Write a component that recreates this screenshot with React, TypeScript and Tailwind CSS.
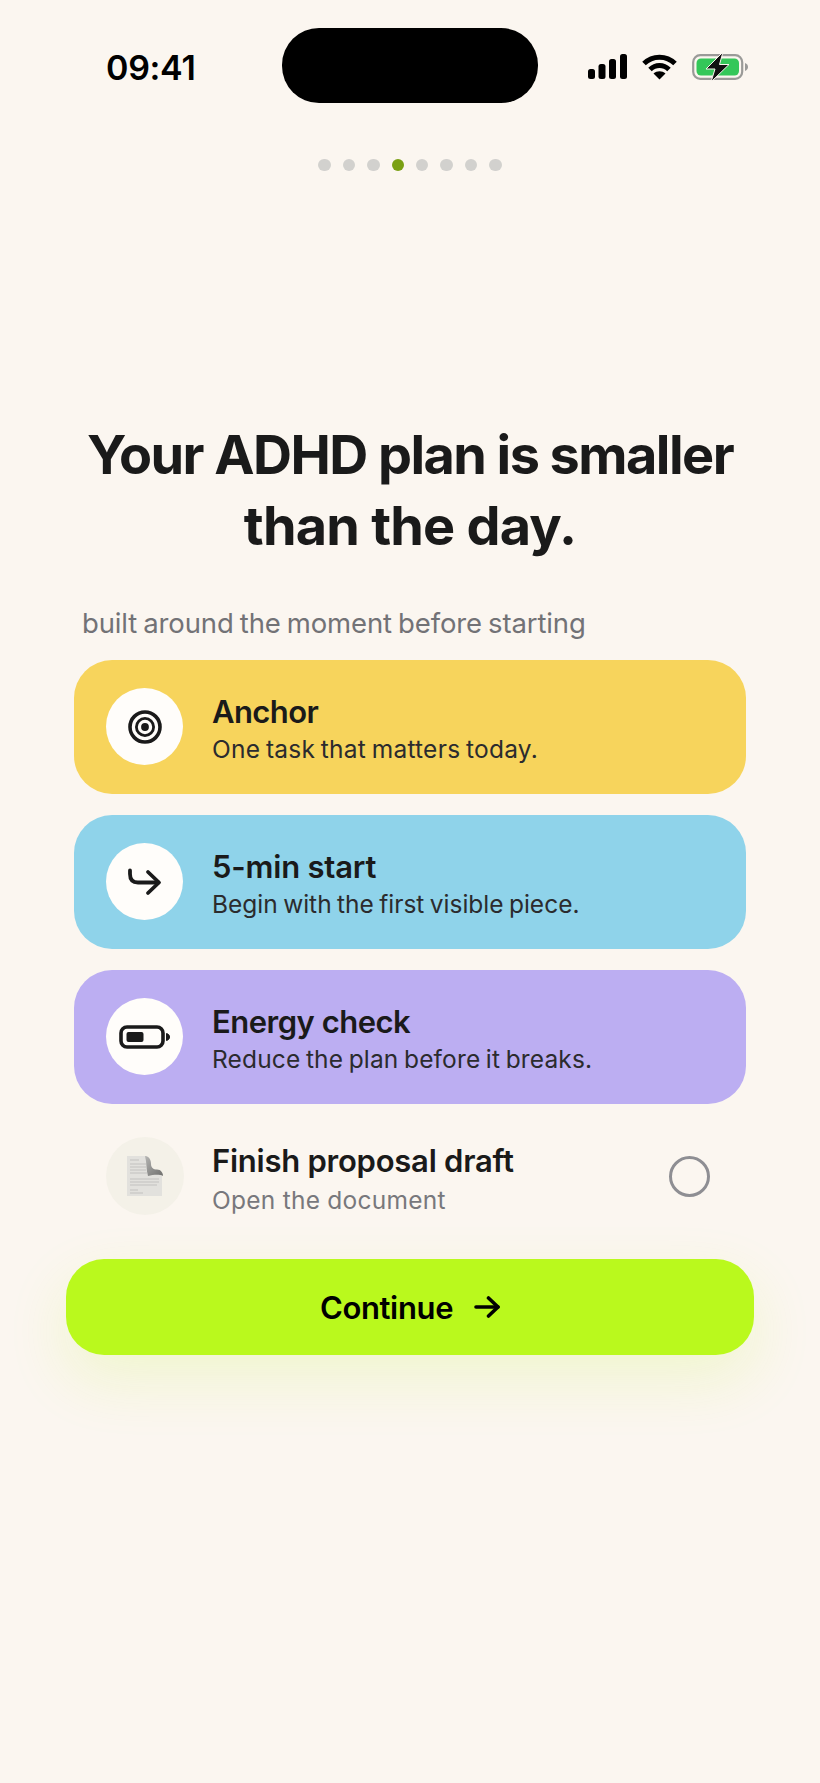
import React from "react";

const font = { fontFamily: "Inter, 'Noto Sans', sans-serif" };

function Signal() {
  return (
    <svg width="40" height="26" viewBox="0 0 40 26" fill="#000">
      <rect x="1" y="15" width="7" height="10" rx="2.5" />
      <rect x="11.5" y="10" width="7" height="15" rx="2.5" />
      <rect x="22" y="5" width="7" height="20" rx="2.5" />
      <rect x="33" y="0" width="7" height="25" rx="2.5" />
    </svg>
  );
}

function Wifi() {
  return (
    <svg width="35" height="26" viewBox="0 0 35 26" fill="none" stroke="#000" strokeWidth="5">
      <path d="M2 9.5C10.5 1 24.5 1 33 9.5" />
      <path d="M8 15.5C13.5 10.2 21.5 10.2 27 15.5" />
      <path d="M17.5 25.5 L11.5 19.6 C15 16.6 20 16.6 23.5 19.6 Z" fill="#000" stroke="none" />
    </svg>
  );
}

function Battery() {
  return (
    <svg width="57" height="30" viewBox="0 0 57 30" fill="none">
      <rect x="1.2" y="3.2" width="49" height="23.6" rx="7" stroke="#9a9a98" strokeWidth="2.2" />
      <rect x="4.5" y="6.5" width="42.5" height="17" rx="4.5" fill="#34c759" />
      <path d="M53 11 C55 11.8 56 13.2 56 15 C56 16.8 55 18.2 53 19 Z" fill="#9a9a98" />
      <path d="M31 0 L14 17 H23 L19 30 L37 12.5 H27.5 Z" fill="#111" stroke="#fbf6f0" strokeWidth="1" />
    </svg>
  );
}

function Target() {
  return (
    <svg width="36" height="36" viewBox="0 0 36 36" fill="none" stroke="#1a1a1a">
      <circle cx="18" cy="18" r="15" strokeWidth="3.6" />
      <circle cx="18" cy="18" r="8.6" strokeWidth="2.8" />
      <circle cx="18" cy="18" r="3.9" fill="#1a1a1a" stroke="none" />
    </svg>
  );
}

function TurnArrow() {
  return (
    <svg width="36" height="30" viewBox="0 0 36 30" fill="none" stroke="#1a1a1a" strokeWidth="3.8" strokeLinecap="round" strokeLinejoin="round">
      <path d="M3 3.5 V7 C3 12.5 6 15.5 11 15.5 H31" />
      <path d="M21 5 L32 15.5 L21 26" />
    </svg>
  );
}

function BatteryIcon() {
  return (
    <svg width="52" height="26" viewBox="0 0 52 26" fill="none">
      <rect x="2" y="3" width="42" height="20" rx="6" stroke="#1a1a1a" strokeWidth="3.6" />
      <rect x="7.5" y="8" width="17" height="10" rx="2" fill="#1a1a1a" />
      <path d="M47.5 9.5 C49.5 10 50.5 11.2 50.5 13 C50.5 14.8 49.5 16 47.5 16.5 Z" fill="#1a1a1a" stroke="#1a1a1a" strokeWidth="1" />
    </svg>
  );
}

function DocThumb() {
  return (
    <svg width="38" height="42" viewBox="0 0 38 42" style={{ filter: "blur(0.6px)" }}>
      <defs>
        <linearGradient id="fold" x1="0" y1="0" x2="1" y2="1">
          <stop offset="0" stopColor="#b5b5b3" />
          <stop offset="1" stopColor="#6f6f6d" />
        </linearGradient>
      </defs>
      <path d="M1 1 H19 C22 1 24 4 24.5 8 C25 12 26 14 30 14.5 C34 15 36 17 36 20 V41 H1 Z" fill="#e2e1dd" />
      <path d="M19 1 C23 1 25 5 25 9 C25 12.5 27 14.5 31 14.5 C35 14.5 37 18 37 21 C33 19 27 20 22 21 C20 15 21 8 19 1 Z" fill="url(#fold)" />
      <g stroke="#b4b4b1" strokeWidth="0.7">
        <path d="M4 5 H13" />
        <path d="M4 9 H20" />
        <path d="M4 12 H20" />
        <path d="M4 15 H20" />
        <path d="M4 18 H21" />
        <path d="M4 24 H33" />
        <path d="M4 27 H33" />
        <path d="M4 30 H31" />
        <path d="M4 35 H12" />
        <path d="M4 38 H17" />
      </g>
    </svg>
  );
}

function Card({ bg, icon, title, sub, titleTrack, subTrack }: { bg: string; icon: React.ReactNode; title: string; sub: string; titleTrack: string; subTrack: string }) {
  return (
    <div className={`flex h-[134px] items-center gap-[29px] rounded-[38px] pl-[32px] ${bg}`}>
      <div className="mb-[1px] flex h-[77px] w-[77px] shrink-0 items-center justify-center rounded-full bg-[#fffdfa]">{icon}</div>
      <div className="flex flex-col pt-[5px]">
        <div className={`text-[31px] leading-[38px] font-semibold text-[#1a1a1a] ${titleTrack}`}>{title}</div>
        <div className={`text-[24.5px] leading-[36px] font-normal [word-spacing:-1.5px] text-[#2b2b2e] ${subTrack}`}>{sub}</div>
      </div>
    </div>
  );
}

export default function App() {
  const dots = [0, 1, 2, 3, 4, 5, 6, 7];
  return (
    <div className="flex h-[1783px] w-[820px] flex-col bg-[#fbf6f0]" style={font}>
      <div className="flex items-start pt-[28px] pr-[71px] pl-[106px]">
        <div className="w-[176px] pt-[20px] text-[34px] leading-[40px] font-semibold tracking-[-0.3px] text-black">09:41</div>
        <div className="h-[75px] w-[256px] rounded-[37px] bg-black" />
        <div className="ml-auto flex items-center gap-[15px] pt-[24px]">
          <Signal />
          <Wifi />
          <Battery />
        </div>
      </div>

      <div className="mt-[56px] flex justify-center gap-[12px]">
        {dots.map((d) => (
          <div key={d} className={`h-[12.4px] w-[12.4px] rounded-full ${d === 3 ? "bg-[#7aa013]" : "bg-[#d2d1ce]"}`} />
        ))}
      </div>

      <h1 className="mt-[248px] text-center text-[54px] leading-[71px] font-bold tracking-[-1.55px] text-[#1a1a1a]">
        Your ADHD plan is smaller
        <br />
        <span className="tracking-[-0.8px]">than the day.</span>
      </h1>

      <div className="mt-[44px] pl-[82px] text-[27.5px] leading-[36px] tracking-[-0.13px] [word-spacing:-1.5px] text-[#727276]">built around the moment before starting</div>

      <div className="mt-[19px] flex flex-col gap-[21px] px-[74px]">
        <Card bg="bg-[#f7d45c]" icon={<Target />} title="Anchor" titleTrack="tracking-[-0.6px]" subTrack="tracking-[0.25px]" sub="One task that matters today." />
        <Card bg="bg-[#8fd3ea]" icon={<TurnArrow />} title="5-min start" titleTrack="tracking-[-0.2px]" subTrack="tracking-[0px]" sub="Begin with the first visible piece." />
        <Card bg="bg-[#bcaef2]" icon={<BatteryIcon />} title="Energy check" titleTrack="tracking-[-0.5px]" subTrack="tracking-[0.15px]" sub="Reduce the plan before it breaks." />
      </div>

      <div className="mt-[33px] flex items-center pr-[110px] pl-[106px]">
        <div className="flex h-[78px] w-[78px] shrink-0 items-center justify-center rounded-full bg-[#f4f1e8]">
          <DocThumb />
        </div>
        <div className="ml-[28px] -mb-[5px] flex flex-col pt-[5px]">
          <div className="text-[31px] leading-[38px] font-semibold tracking-[-0.25px] text-[#1a1a1a]">Finish proposal draft</div>
          <div className="text-[24.5px] leading-[40px] tracking-[0.25px] text-[#78787c]">Open the document</div>
        </div>
        <div className="ml-auto h-[41px] w-[41px] rounded-full border-[3.5px] border-[#8e8e93]" />
      </div>

      <div className="mt-[44px] px-[66px]">
        <div className="flex h-[96px] items-center justify-center gap-[21px] rounded-[38px] bg-[#baf91d] shadow-[0_24px_60px_rgba(186,249,29,0.16)]">
          <span className="pt-[2px] text-[31px] font-semibold tracking-[-0.35px] text-black">Continue</span>
          <svg width="26" height="24" viewBox="0 0 26 24" fill="none" stroke="#000" strokeWidth="3.6" strokeLinecap="round" strokeLinejoin="round">
            <path d="M2 12 H24" />
            <path d="M14.5 3 L24 12 L14.5 21" />
          </svg>
        </div>
      </div>
    </div>
  );
}
